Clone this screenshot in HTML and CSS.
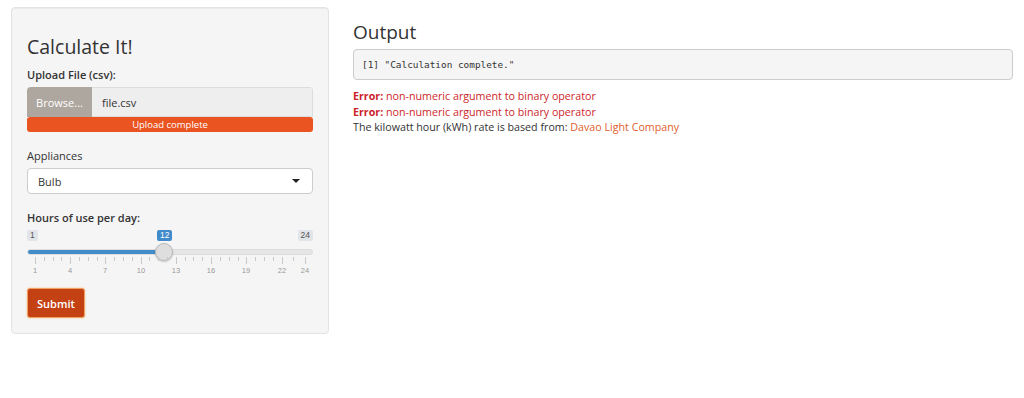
FILE: index.html
```html
<!DOCTYPE html>
<html>
<head>
<meta charset="utf-8">
<link rel="stylesheet" href="styles.css">
</head>
<body>
<div class="page">
  <aside class="well">
    <h2 class="title">Calculate It!</h2>
    <div class="group">
      <label class="lbl">Upload File (csv):</label>
      <div class="file-input">
        <span class="browse">Browse...</span>
        <span class="fname">file.csv</span>
      </div>
      <div class="progress">Upload complete</div>
    </div>
    <div class="group g2">
      <label class="lbl norm">Appliances</label>
      <div class="select">
        <span>Bulb</span>
        <span class="caret"></span>
      </div>
    </div>
    <div class="group g3">
      <label class="lbl">Hours of use per day:</label>
      <div class="slider">
        <div class="minmax">
          <span class="mm">1</span>
          <span class="mm">24</span>
        </div>
        <span class="single">12</span>
        <div class="track"><div class="fill"></div></div>
        <span class="handle"></span>
        <div class="grid" id="grid"></div>
      </div>
    </div>
    <button class="submit">Submit</button>
  </aside>
  <main class="main">
    <h2 class="out-title">Output</h2>
    <pre class="pre">[1] "Calculation complete."</pre>
    <div class="err"><b>Error:</b> non-numeric argument to binary operator</div>
    <div class="err"><b>Error:</b> non-numeric argument to binary operator</div>
    <div class="txt">The kilowatt hour (kWh) rate is based from: <a class="link">Davao Light Company</a></div>
  </main>
</div>
<script src="script.js"></script>
</body>
</html>
```
FILE: styles.css
```css
* { box-sizing: border-box; }
body {
  margin: 0;
  font-family: "Open Sans", "Noto Sans", sans-serif;
  font-size: 10.8px;
  color: #333;
  background: #fff;
}
.page {
  display: flex;
  align-items: flex-start;
  padding: 7px 11px 0 11px;
  gap: 24px;
}
.well {
  width: 318px;
  flex: none;
  background: #f5f5f5;
  border: 1px solid #e3e3e3;
  border-radius: 4px;
  padding: 26px 15px 15px 15px;
  box-shadow: inset 0 1px 1px rgba(0,0,0,0.05);
}
.title {
  margin: 0 0 7px 0;
  font-weight: 400;
  font-size: 19.5px;
  line-height: 26px;
  color: #333;
}
.lbl {
  display: block;
  font-weight: 600;
  font-size: 11px;
  line-height: 16px;
  margin-bottom: 4px;
}
.lbl.norm { font-weight: 500; }
.file-input {
  display: flex;
  height: 30px;
  border-radius: 4px 4px 0 0;
  overflow: hidden;
}
.browse {
  width: 65px;
  background: #aea79f;
  color: #fff;
  display: flex;
  align-items: center;
  justify-content: center;
  font-size: 11px;
}
.fname {
  flex: 1;
  background: #eeeeee;
  border: 1px solid #ddd;
  border-left: none;
  display: flex;
  align-items: center;
  padding-left: 10px;
  font-size: 11px;
}
.progress {
  height: 15px;
  background: #e95420;
  color: #fff;
  font-size: 9.5px;
  line-height: 15px;
  text-align: center;
  border-radius: 3px;
}
.g2 { margin-top: 16px; }
.select {
  height: 26px;
  background: #fff;
  border: 1px solid #ccc;
  border-radius: 4px;
  display: flex;
  align-items: center;
  justify-content: space-between;
  padding: 0 12px 0 10px;
  font-size: 11px;
}
.caret {
  width: 0;
  height: 0;
  border-left: 4px solid transparent;
  border-right: 4px solid transparent;
  border-top: 4px solid #222;
}
.g3 { margin-top: 16px; }
.slider {
  position: relative;
  height: 48px;
}
.minmax {
  display: flex;
  justify-content: space-between;
}
.mm {
  background: #e1e4e9;
  color: #555;
  font-size: 8.5px;
  line-height: 11px;
  padding: 0 3px;
  border-radius: 2px;
  font-family: "Liberation Sans", sans-serif;
}
.single {
  position: absolute;
  left: 130px;
  top: 0;
  background: #428bca;
  color: #fff;
  font-size: 8.5px;
  line-height: 11px;
  padding: 0 3px;
  border-radius: 2px;
  font-family: "Liberation Sans", sans-serif;
}
.track {
  margin-top: 8px;
  height: 6px;
  background: #e6e6e6;
  border: 1px solid #ddd;
  border-radius: 3px;
  overflow: hidden;
}
.fill {
  width: 137px;
  height: 100%;
  background: #428bca;
}
.handle {
  position: absolute;
  left: 128px;
  top: 13px;
  width: 18px;
  height: 18px;
  border-radius: 50%;
  background: #dedede;
  border: 1px solid #bbb;
  box-shadow: 0 1px 2px rgba(0,0,0,0.2);
}
.grid {
  position: absolute;
  left: 0;
  right: 0;
  top: 27px;
  height: 20px;
}
.tick {
  position: absolute;
  top: 0;
  width: 1px;
  background: #c8c8c8;
}
.tick.major { height: 7px; }
.tick.minor { height: 4px; }
.glab {
  position: absolute;
  top: 9px;
  font-size: 7.5px;
  color: #999;
  transform: translateX(-50%);
  font-family: "Liberation Sans", sans-serif;
}
.submit {
  margin-top: 10px;
  display: block;
  height: 30px;
  padding: 0 9px;
  background: #c34113;
  color: #fff;
  border: 1px solid #f0a060;
  border-radius: 3px;
  box-shadow: 0 0 2px rgba(240,160,80,0.6);
  font-family: "Open Sans", "Noto Sans", sans-serif;
  font-size: 11px;
  font-weight: 600;
}
.main {
  flex: 1;
  padding-top: 12px;
  max-width: 660px;
}
.out-title {
  margin: 0 0 4px 0;
  font-weight: 400;
  font-size: 19px;
  line-height: 26px;
}
.pre {
  margin: 0 0 9px 0;
  height: 31px;
  background: #f5f5f5;
  border: 1px solid #ccc;
  border-radius: 4px;
  padding: 0 8px;
  font-family: "DejaVu Sans Mono", monospace;
  font-size: 9.4px;
  line-height: 29px;
  color: #333;
}
.err {
  color: #cc1f2a;
  line-height: 15.5px;
  font-size: 10.7px;
}
.err b { font-weight: 700; }
.txt {
  line-height: 15.5px;
  font-size: 10.7px;
}
.link { color: #e0602c; text-decoration: none; }
```
FILE: script.js
```js
(function(){
  var g = document.getElementById('grid');
  var x0 = 8, x1 = 278;
  function pos(v){ return x0 + (v - 1) * (x1 - x0) / 23; }
  var majors = [1,4,7,10,13,16,19,22,24];
  majors.forEach(function(v){
    var t = document.createElement('span');
    t.className = 'tick major';
    t.style.left = Math.round(pos(v)) + 'px';
    g.appendChild(t);
    var l = document.createElement('span');
    l.className = 'glab';
    l.style.left = Math.round(pos(v)) + 'px';
    l.textContent = v;
    g.appendChild(l);
  });
  for (var i = 0; i < majors.length - 1; i++) {
    var a = majors[i], b = majors[i+1];
    var n = (b - a === 3) ? 4 : 2;
    for (var k = 1; k < n; k++) {
      var v = a + (b - a) * k / n;
      var t = document.createElement('span');
      t.className = 'tick minor';
      t.style.left = Math.round(pos(v)) + 'px';
      g.appendChild(t);
    }
  }
})();
```
